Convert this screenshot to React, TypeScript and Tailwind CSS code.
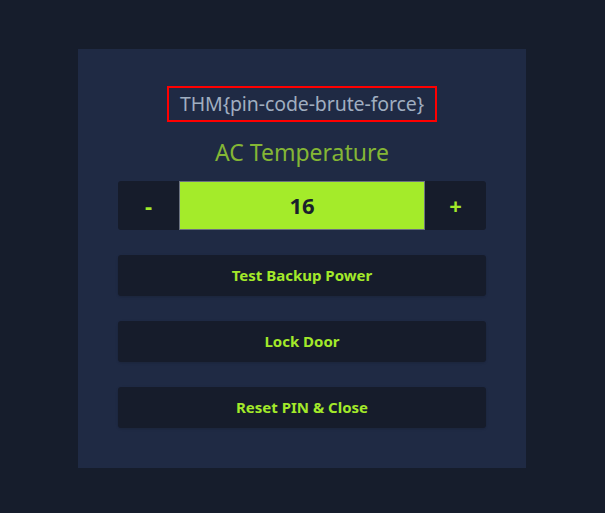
export default function App() {
  return (
    <main
      className="min-h-screen w-full bg-[#161d2c] pt-[49px]"
      style={{ fontFamily: '"Noto Sans", "Open Sans", sans-serif' }}
    >
      <div className="ml-[78px] flex w-[448px] flex-col items-center bg-[#1f2a44] px-10 pt-[37px] pb-10">
        {/* Flag */}
        <div className="flex h-[36px] w-[270px] items-center justify-center border-2 border-[#ff0000] text-[19.5px] tracking-[-0.1px] text-[#a0aec0]">
          THM{'{'}pin-code-brute-force{'}'}
        </div>

        <h2 className="mt-[12px] text-[23px] leading-[36px] text-[#84b635]">AC Temperature</h2>

        {/* Temperature control */}
        <div className="mt-[11px] flex h-[49px] w-full">
          <button className="w-[61px] rounded-l-[3px] bg-[#161c2b] text-[22px] font-bold text-[#a3e92a]">
            -
          </button>
          <div className="flex flex-1 items-center justify-center border border-[#6b7280] bg-[#a4eb2a] text-[22px] font-bold text-[#1a202c]">
            16
          </div>
          <button className="w-[61px] rounded-r-[3px] bg-[#161c2b] text-[22px] font-bold text-[#a3e92a]">
            +
          </button>
        </div>

        {/* Actions */}
        <div className="mt-[25px] flex w-full flex-col gap-[25px]">
          {['Test Backup Power', 'Lock Door', 'Reset PIN & Close'].map((label) => (
            <button
              key={label}
              className="h-[41px] w-full rounded-[3px] bg-[#161c2b] text-[15px] font-bold text-[#a3e92a] shadow-sm"
            >
              {label}
            </button>
          ))}
        </div>
      </div>
    </main>
  );
}
